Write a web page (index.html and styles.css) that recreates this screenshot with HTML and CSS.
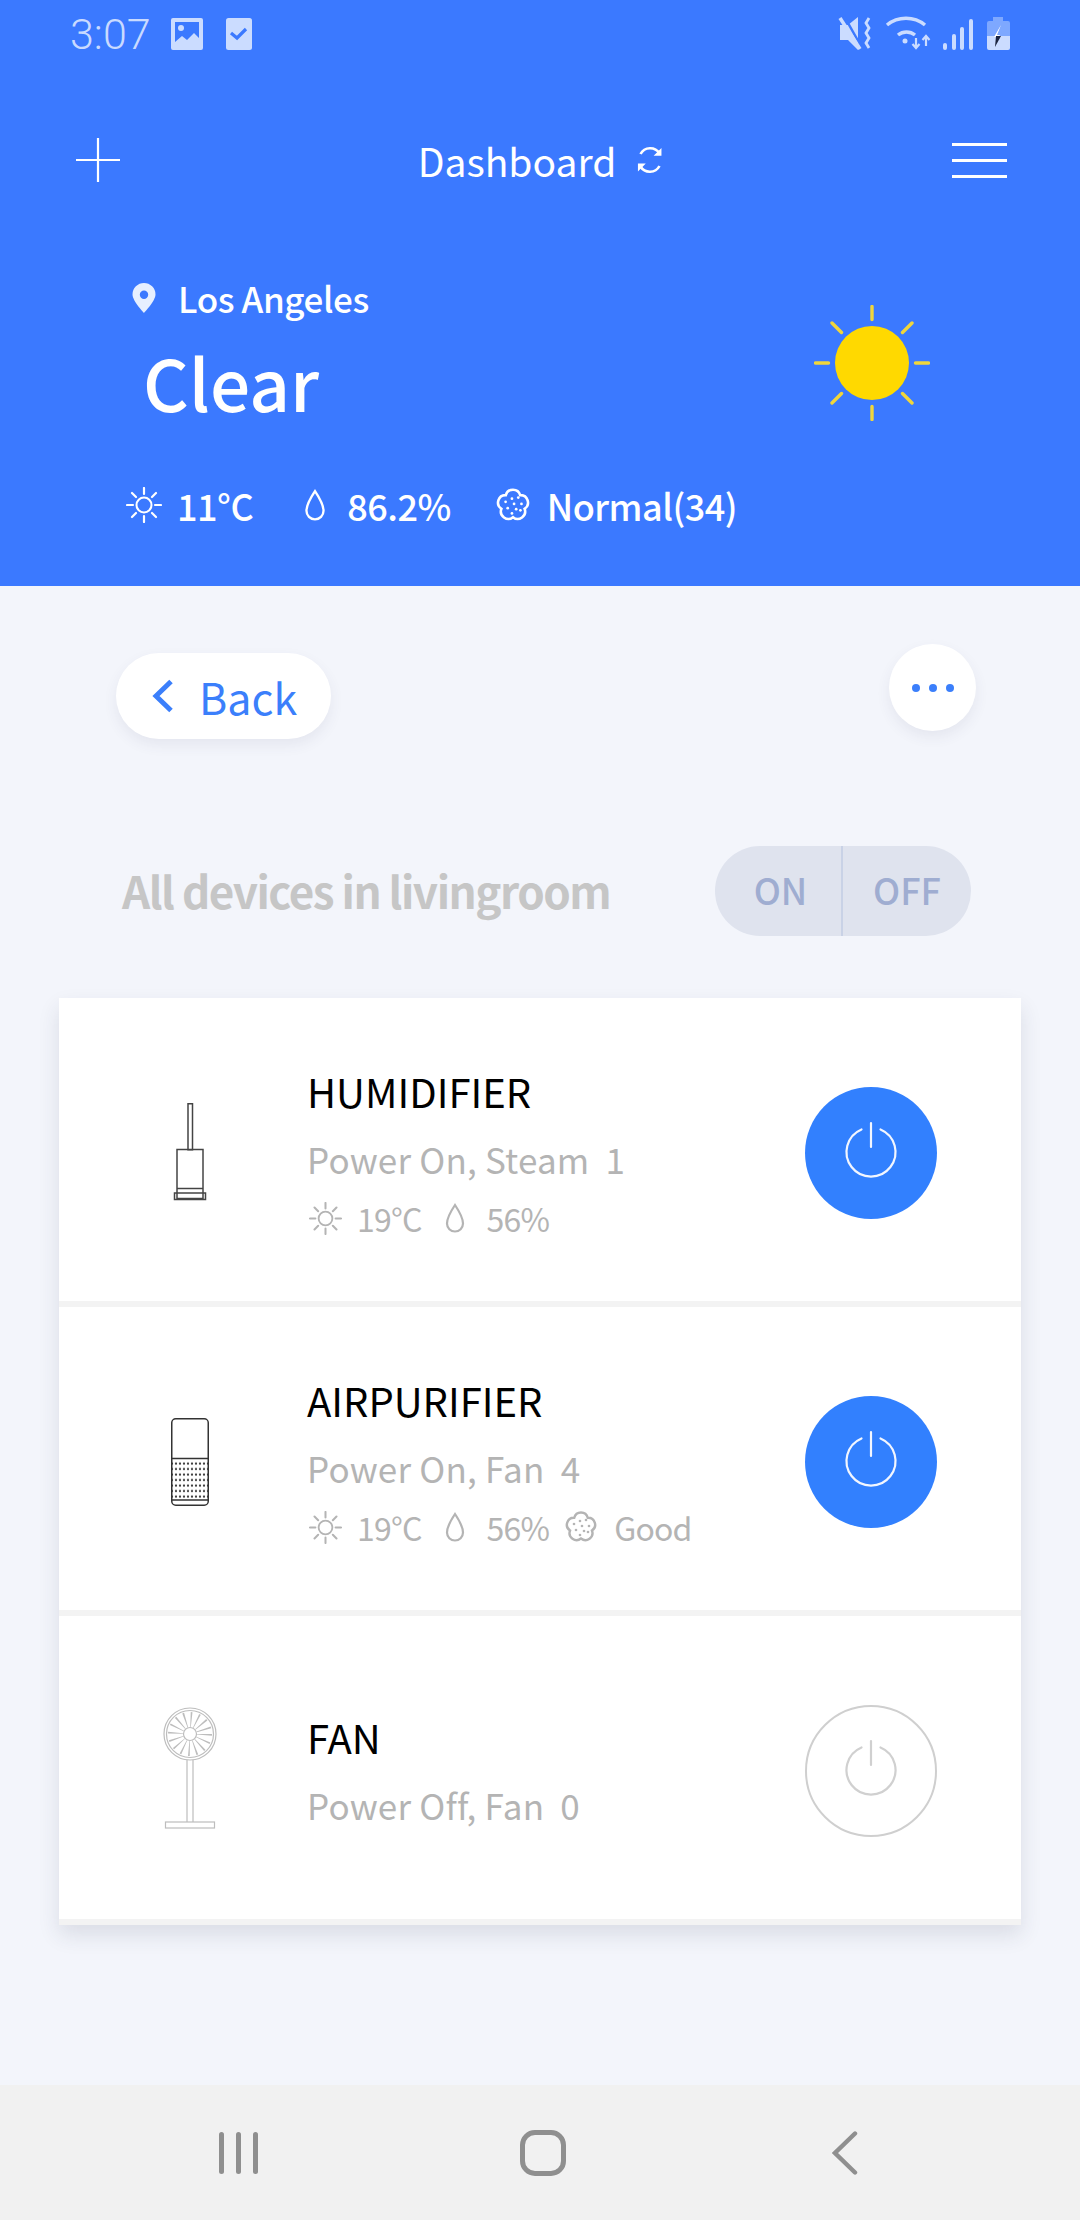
FILE: index.html
```html
<!DOCTYPE html>
<html lang="en">

<head>
    <meta charset="UTF-8">
    <meta name="viewport" content="width=device-width, initial-scale=1.0">
    <title>Dashboard</title>
    <link rel="stylesheet" href="styles.css">
</head>

<body>
    <svg class="defs" width="0" height="0">
        <symbol id="i-sun" viewBox="0 0 36 36">
            <circle cx="18" cy="18" r="7.5" fill="none" stroke="currentColor" stroke-width="2"/>
            <path d="M18 1v6M18 29v6M1 18h6M29 18h6M6 6l4 4M26 26l4 4M6 30l4-4M26 10l4-4" fill="none" stroke="currentColor" stroke-width="2.2" stroke-linecap="round"/>
        </symbol>
        <symbol id="i-drop" viewBox="0 0 22 30">
            <path d="M11 2C11 2 3 14 3 20.500a8 8 0 0 0 16 0C19 14 11 2 11 2Z" fill="none" stroke="currentColor" stroke-width="2.200"/>
        </symbol>
        <symbol id="i-dust" viewBox="0 0 34 34">
            <path d="M10.240 7.700A7 7 0 0 1 23.760 7.700A7 7 0 0 1 27.940 20.550A7 7 0 0 1 17 28.500A7 7 0 0 1 6.060 20.550A7 7 0 0 1 10.240 7.700Z" fill="none" stroke="currentColor" stroke-width="2.400"/>
            <g fill="currentColor">
                <circle cx="10" cy="14" r="1.300"/><circle cx="16" cy="11" r="1.300"/><circle cx="22" cy="10" r="1.300"/>
                <circle cx="25" cy="16" r="1.300"/><circle cx="18" cy="16" r="1.300"/><circle cx="12" cy="20" r="1.300"/>
                <circle cx="20" cy="21" r="1.300"/><circle cx="16" cy="25" r="1.300"/><circle cx="24" cy="22" r="1.300"/>
            </g>
        </symbol>
        <symbol id="i-power" viewBox="0 0 60 60">
            <path d="M20.500 11.500A24.500 24.500 0 1 0 39.500 11.500M30 5v24" fill="none" stroke="currentColor" stroke-width="2.200" stroke-linecap="round"/>
        </symbol>
        <pattern id="holes" width="4" height="5.500" patternUnits="userSpaceOnUse">
            <circle cx="2" cy="2.500" r="1.100" fill="#333"/>
        </pattern>
    </svg>

    <div class="phone">
        <header class="header">
            <div class="status">
                <div class="status-left">
                    <span class="clock">3:07</span>
                    <svg class="st-img" width="32" height="32" viewBox="0 0 32 32">
                        <path fill-rule="evenodd" d="M2 0h28a2 2 0 0 1 2 2v28a2 2 0 0 1-2 2H2a2 2 0 0 1-2-2V2a2 2 0 0 1 2-2ZM4 4v20l7-6 5 4 7-7 5 5V4Z" fill="#cbdcff"/>
                        <circle cx="10" cy="10" r="3" fill="#cbdcff"/>
                    </svg>
                    <svg class="st-check" width="26" height="32" viewBox="0 0 26 32">
                        <rect width="26" height="32" rx="2.500" fill="#cbdcff"/>
                        <path d="M5 15l6 5 9-9" fill="none" stroke="#3b79ff" stroke-width="3.200"/>
                    </svg>
                </div>
                <svg class="status-right" width="190" height="60" viewBox="0 0 190 60">
                    <path d="M10 20h8l10-8v33L18 35h-8Z" fill="#cbdcff"/>
                    <path d="M14 11l17 30" stroke="#3b79ff" stroke-width="2.500"/>
                    <path d="M10 13l20 31" stroke="#cbdcff" stroke-width="3.500"/>
                    <path d="M39 13l-3 5 3 5-3 5 3 5-3 5 3 5" fill="none" stroke="#cbdcff" stroke-width="2.800"/>
                    <g fill="none" stroke="#cbdcff" stroke-width="3.500">
                        <path d="M57 20c11-9 27-9 38 0"/>
                        <path d="M68 30c5-4 12-4 17 0"/>
                    </g>
                    <circle cx="75" cy="36" r="2.500" fill="#cbdcff"/>
                    <path d="M86 33v10M82.500 39l3.500 4 3.500-4M96 41V31M92.500 35l3.500-4 3.500 4" fill="none" stroke="#cbdcff" stroke-width="2.200"/>
                    <g fill="#cbdcff">
                        <rect x="113" y="38" width="4" height="7" rx="2"/>
                        <rect x="122" y="29" width="4" height="16" rx="2"/>
                        <rect x="130" y="22" width="4" height="23" rx="2"/>
                        <rect x="139" y="14" width="4" height="31" rx="2"/>
                    </g>
                    <path d="M163 12h10v4h5a2 2 0 0 1 2 2v13h-23V18a2 2 0 0 1 2-2h4Z" fill="#7ea8ff"/>
                    <path d="M157 31h23v12a2 2 0 0 1-2 2h-19a2 2 0 0 1-2-2Z" fill="#cbdcff"/>
                    <path d="M171 20l-7 12h5l1-2h-3Z" fill="#fff"/>
                    <path d="M171 31h-5l-1 11Z" fill="#1c2540"/>
                </svg>
            </div>

            <div class="topbar">
                <svg class="plus" width="44" height="44" viewBox="0 0 44 44">
                    <path d="M22 0v44M0 22h44" stroke="#fff" stroke-width="2.200"/>
                </svg>
                <div class="topbar-title">
                    <span>Dashboard</span>
                    <svg width="30" height="30" viewBox="0 0 30 30">
                        <path d="M24.500 8.500A11 11 0 0 0 5.500 9M5.500 21.500a11 11 0 0 0 19-.5" fill="none" stroke="#fff" stroke-width="2.600"/>
                        <path d="M27 3v8h-8ZM3 27v-8h8Z" fill="#fff" transform="scale(.98)"/>
                    </svg>
                </div>
                <div class="menu"><i></i><i></i><i></i></div>
            </div>

            <div class="weather">
                <div class="weather-text">
                    <div class="place">
                        <svg width="24" height="30" viewBox="0 0 24 30">
                            <path fill-rule="evenodd" d="M12 0a11.500 11.500 0 0 1 11.500 11.500C23.500 18 12 30 12 30S.500 18 .500 11.500A11.500 11.500 0 0 1 12 0Zm0 7.500a4.200 4.200 0 1 0 0 8.400 4.200 4.200 0 0 0 0-8.400Z" fill="#e6efff"/>
                        </svg>
                        <span>Los Angeles</span>
                    </div>
                    <div class="sky">Clear</div>
                    <div class="stats">
                        <svg class="s-sun"><use href="#i-sun"/></svg>
                        <span class="s-temp">11°C</span>
                        <svg class="s-drop"><use href="#i-drop"/></svg>
                        <span class="s-hum">86.2%</span>
                        <svg class="s-dust"><use href="#i-dust"/></svg>
                        <span>Normal(34)</span>
                    </div>
                </div>
                <svg class="sun-big" width="116" height="116" viewBox="0 0 116 116">
                    <circle cx="58" cy="58" r="37" fill="#ffd900"/>
                    <path d="M58 1.500v13M58 101.500v13M1.500 58h13M101.500 58h13M18 18l9.500 9.500M88.500 88.500l9.500 9.500M18 98l9.500-9.500M88.500 27.500l9.500-9.500" stroke="#f0d63c" stroke-width="3.400" stroke-linecap="round"/>
                </svg>
            </div>
        </header>

        <main class="content">
            <div class="actions">
                <div class="back">
                    <svg width="22" height="34" viewBox="0 0 22 34">
                        <path d="M19 2.500L4 17l15 14.500" fill="none" stroke="#3b7ffb" stroke-width="5"/>
                    </svg>
                    <span>Back</span>
                </div>
                <div class="more"><i></i><i></i><i></i></div>
            </div>

            <div class="group">
                <h2>All devices in livingroom</h2>
                <div class="switch">
                    <span>ON</span>
                    <span>OFF</span>
                </div>
            </div>

            <div class="devices">
                <div class="device">
                    <svg class="pic" width="120" height="100" viewBox="0 0 120 100">
                        <g fill="none" stroke="#444" stroke-width="1.500">
                            <rect x="58" y=".750" width="4.500" height="46"/>
                            <rect x="47" y="46.500" width="26" height="49"/>
                            <path d="M47 85.500h26"/>
                            <rect x="44.500" y="90" width="31" height="6.500"/>
                        </g>
                    </svg>
                    <div class="info">
                        <div class="name">HUMIDIFIER</div>
                        <div class="sub">Power On, Steam&nbsp; 1</div>
                        <div class="meta">
                            <svg class="m-sun"><use href="#i-sun"/></svg>
                            <span class="m-temp">19°C</span>
                            <svg class="m-drop"><use href="#i-drop"/></svg>
                            <span>56%</span>
                        </div>
                    </div>
                    <div class="power on"><svg><use href="#i-power"/></svg></div>
                </div>

                <div class="device">
                    <svg class="pic" width="120" height="90" viewBox="0 0 120 90">
                        <rect x="41.750" y="1.750" width="36.500" height="86.500" rx="4" fill="#fff"/>
                        <rect x="42" y="43" width="36" height="39" fill="url(#holes)"/>
                        <rect x="41.750" y="1.750" width="36.500" height="86.500" rx="4" fill="none" stroke="#333" stroke-width="1.500"/>
                        <path d="M42 41.500h36M42 83h36" stroke="#333" stroke-width="1.500"/>
                    </svg>
                    <div class="info">
                        <div class="name">AIRPURIFIER</div>
                        <div class="sub">Power On, Fan&nbsp; 4</div>
                        <div class="meta">
                            <svg class="m-sun"><use href="#i-sun"/></svg>
                            <span class="m-temp">19°C</span>
                            <svg class="m-drop"><use href="#i-drop"/></svg>
                            <span class="m-hum">56%</span>
                            <svg class="m-dust"><use href="#i-dust"/></svg>
                            <span>Good</span>
                        </div>
                    </div>
                    <div class="power on"><svg><use href="#i-power"/></svg></div>
                </div>

                <div class="device">
                    <svg class="pic" width="120" height="130" viewBox="0 0 120 130">
                        <g fill="none" stroke="#bdbdbd" stroke-width="1.200">
                            <circle cx="60" cy="28" r="26"/>
                            <circle cx="60" cy="28" r="23.500"/>
                            <circle cx="60" cy="28" r="6.500"/>
                            <circle cx="60" cy="28" r="14.500" stroke-width="15" stroke-dasharray="1.200 4.500"/>
                            <path d="M57 54v62M63 54v62"/>
                            <rect x="35.500" y="116" width="49" height="6"/>
                        </g>
                    </svg>
                    <div class="info">
                        <div class="name">FAN</div>
                        <div class="sub">Power Off, Fan&nbsp; 0</div>
                    </div>
                    <div class="power"><svg><use href="#i-power"/></svg></div>
                </div>
            </div>
        </main>

        <nav class="navbar">
            <div class="nav-lines"><i></i><i></i><i></i></div>
            <div class="nav-home"></div>
            <svg width="26" height="44" viewBox="0 0 26 44">
                <path d="M23 2.500L3 22l20 19.500" fill="none" stroke="#8f8f8f" stroke-width="4.400" stroke-linecap="round"/>
            </svg>
        </nav>
    </div>
</body>

</html>
```

FILE: styles.css
```css
* {
    margin: 0;
    padding: 0;
    box-sizing: border-box;
}

body {
    width: 1080px;
    height: 2220px;
    overflow: hidden;
    font-family: "Noto Sans CJK KR", "Noto Sans", sans-serif;
    background-color: #f3f5fb;
}

.defs {
    position: absolute;
}

.phone {
    height: 2220px;
    display: flex;
    flex-direction: column;
}

/* top blue part */
.header {
    height: 586px;
    background-color: #3b79ff;
    color: #fff;
}

.status {
    height: 68px;
    padding: 0 60px 0 71px;
    display: flex;
    justify-content: space-between;
    align-items: flex-start;
}

.status-left {
    display: flex;
    align-items: center;
    padding-top: 18px;
}

.clock {
    width: 100px;
    margin-left: -1px;
    margin-right: 1px;
    font-family: Roboto, sans-serif;
    font-weight: 300;
    font-size: 43px;
    line-height: 32px;
    color: #c9daff;
}

.st-check {
    margin-left: 23px;
}

.status-right {
    margin-top: 5px;
}

.topbar {
    margin-top: 70px;
    padding: 0 73px 0 76px;
    display: grid;
    grid-template-columns: 1fr auto 1fr;
    align-items: center;
    height: 44px;
}

.topbar-title {
    display: flex;
    align-items: center;
    gap: 19px;
    font-size: 39px;
    line-height: 44px;
}

.menu {
    justify-self: end;
    width: 55px;
    display: flex;
    flex-direction: column;
    gap: 13px;
}

.menu i {
    height: 3px;
    background-color: #fff;
}

.weather {
    margin-top: 94px;
    padding: 0 0 0 126px;
    display: flex;
}

.weather-text {
    width: 620px;
    font-weight: 500;
}

.place {
    margin-left: 6px;
    display: flex;
    align-items: center;
    gap: 22px;
    font-size: 35px;
    letter-spacing: -.4px;
    line-height: 44px;
}

.sky {
    margin: 16px 0 0 17px;
    font-size: 71px;
    line-height: 90px;
}

.stats {
    margin-top: 54px;
    display: flex;
    align-items: center;
    font-size: 36px;
    letter-spacing: -.5px;
    line-height: 50px;
}

.s-sun {
    width: 36px;
    height: 36px;
    margin-right: 15px;
}

.s-drop {
    width: 24px;
    height: 32px;
    margin: 0 20px 0 50px;
}

.s-dust {
    width: 36px;
    height: 36px;
    margin: 0 16px 0 44px;
}

.sun-big {
    margin: 29px 0 0 68px;
}

/* grey part */
.content {
    flex: 1;
    padding: 58px 59px 0;
}

.actions {
    padding: 0 45px 0 57px;
    display: flex;
    justify-content: space-between;
    align-items: flex-start;
}

.back {
    margin-top: 9px;
    width: 215px;
    height: 86px;
    border-radius: 43px;
    background-color: #fff;
    box-shadow: 0 6px 14px rgba(60, 70, 100, .08);
    display: flex;
    align-items: center;
    padding-left: 36px;
    gap: 25px;
    color: #3b7ffb;
    font-size: 43px;
}

.more {
    width: 87px;
    height: 87px;
    border-radius: 50%;
    background-color: #fff;
    box-shadow: 0 6px 14px rgba(60, 70, 100, .08);
    display: flex;
    justify-content: center;
    align-items: center;
    gap: 9px;
}

.more i {
    width: 8px;
    height: 8px;
    border-radius: 50%;
    background-color: #3b7ffb;
}

.group {
    margin-top: 107px;
    padding: 0 50px 0 63px;
    height: 90px;
    display: flex;
    justify-content: space-between;
    align-items: center;
}

.group h2 {
    padding-bottom: 3px;
    font-size: 44px;
    font-weight: 700;
    letter-spacing: -1.5px;
    color: #c6c6c6;
}

.switch {
    width: 256px;
    height: 90px;
    border-radius: 45px;
    background-color: #dfe3ee;
    display: flex;
    font-size: 36px;
    font-weight: 500;
    color: #9fadd1;
}

.switch span {
    width: 128px;
    padding-bottom: 5px;
    display: flex;
    justify-content: center;
    align-items: center;
}

.switch span:first-child {
    padding-left: 5px;
    border-right: 2px solid #c9d2e6;
}

.devices {
    margin-top: 62px;
    background-color: #fff;
    box-shadow: 0 10px 20px rgba(40, 50, 70, .12);
}

.device {
    height: 309px;
    padding: 7px 84px 0 71px;
    border-bottom: 6px solid #f3f3f3;
    display: flex;
    align-items: center;
}

.pic {
    flex: none;
}

.info {
    flex: 1;
    margin-left: 57px;
}

.name {
    font-size: 40px;
    line-height: 62px;
    color: #000;
}

.sub {
    padding-top: 6px;
    font-size: 35px;
    letter-spacing: .2px;
    line-height: 62px;
    color: #b4b4b4;
}

.meta {
    display: flex;
    align-items: center;
    font-size: 32px;
    letter-spacing: -.8px;
    line-height: 56px;
    color: #b4b4b4;
}

.m-sun {
    width: 33px;
    height: 33px;
    margin: 0 15px 0 2px;
}

.m-drop {
    width: 22px;
    height: 30px;
    margin: 0 21px 0 22px;
}

.m-dust {
    width: 34px;
    height: 34px;
    margin: 0 16px 0 15px;
}

.power {
    flex: none;
    width: 132px;
    height: 132px;
    border-radius: 50%;
    border: 2px solid #cfcfcf;
    color: #d0d0d0;
    display: flex;
    justify-content: center;
    align-items: center;
}

.power.on {
    border: 0;
    background-color: #3280fe;
    color: #f2f6ff;
}

.power svg {
    width: 60px;
    height: 60px;
    margin-top: -10px;
}

.navbar {
    height: 135px;
    background-color: #f1f1f1;
    padding: 0 222px 0 219px;
    display: flex;
    justify-content: space-between;
    align-items: center;
}

.nav-lines {
    display: flex;
    gap: 12px;
}

.nav-lines i {
    width: 5px;
    height: 42px;
    border-radius: 3px;
    background-color: #8f8f8f;
}

.nav-home {
    width: 46px;
    height: 46px;
    margin-right: 5px;
    border: 5px solid #8f8f8f;
    border-radius: 15px;
}
```
